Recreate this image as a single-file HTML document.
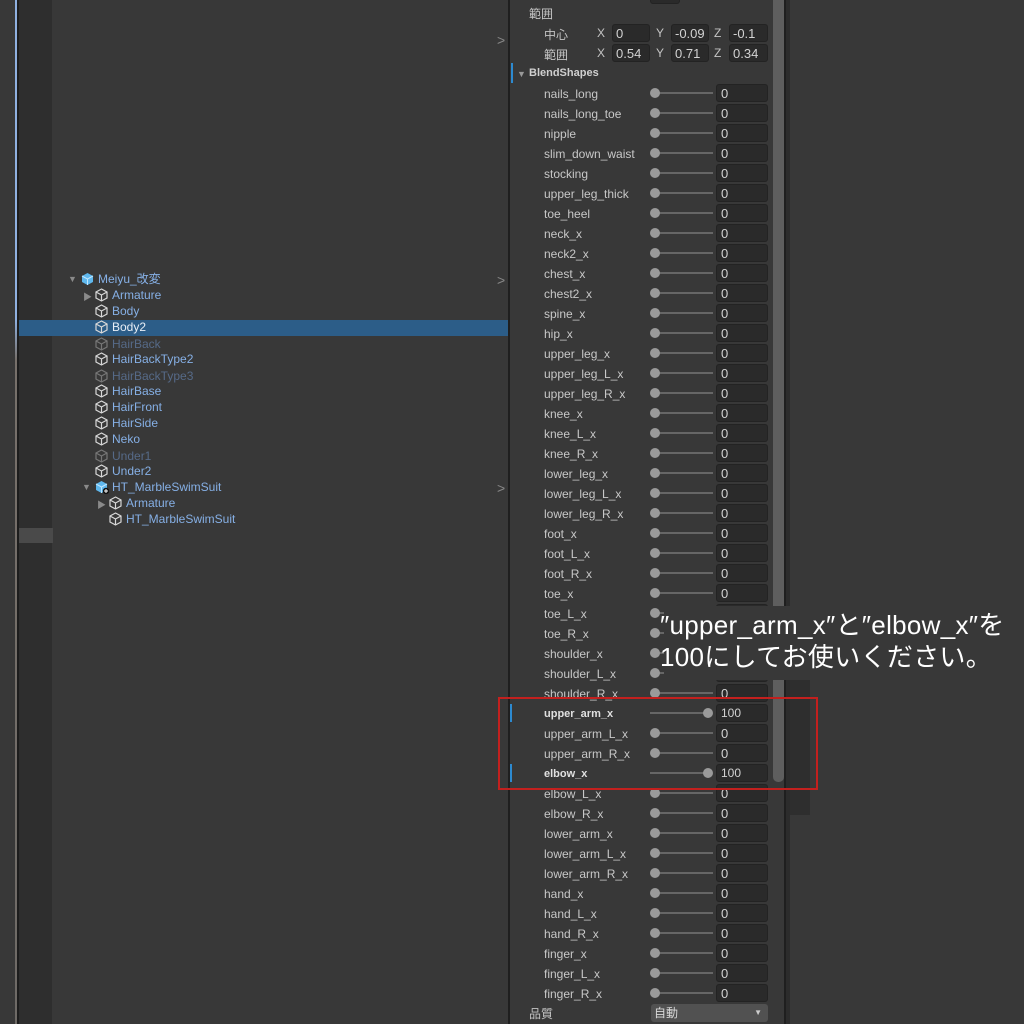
<!DOCTYPE html>
<html><head><meta charset="utf-8"><style>
*{margin:0;padding:0;box-sizing:border-box}
body{width:1024px;height:1024px;background:#383838;position:relative;overflow:hidden;font-family:"Liberation Sans","Noto Sans CJK JP",sans-serif;font-size:12px;color:#c4c4c4}
.a{position:absolute}
.h{position:absolute;height:16px;line-height:16px;color:#86b0e6;white-space:nowrap}
.h svg{position:absolute;left:-17px;top:1px}
.dis{color:#566a88}
.r{position:absolute;left:510px;width:262px;height:20px}
.r .l{position:absolute;left:34px;top:4px;line-height:14px;color:#c8c8c8}
.r .t{position:absolute;left:145px;top:9px;width:58px;height:2px;background:#666}
.r .d{position:absolute;left:140px;top:5px;width:10px;height:10px;border-radius:50%;background:#9a9a9a}
.r .f{position:absolute;left:206px;top:1px;width:52px;height:18px;background:#2a2a2a;border:1px solid #232323;border-radius:3px;line-height:17px;padding-left:4px;color:#d2d2d2;font-size:13px}
.b .l{color:#e0e0e0;font-weight:bold;font-size:11px}
.b .t{left:140px}
.b .d{left:193px}
.b .f{font-size:12px}
.b:before{content:"";position:absolute;left:0;top:1px;width:2px;height:18px;background:#2d8ad0}
.in{position:absolute;height:18px;background:#2a2a2a;border:1px solid #232323;border-radius:3px;line-height:17px;padding-left:3px;color:#d2d2d2;font-size:13px}
</style></head><body>
<div class="a" style="left:15px;top:0;width:2px;height:1024px;background:linear-gradient(#8fb0e0 0,#8fb0e0 320px,#77706a 360px,#6e6a66 1024px)"></div>
<div class="a" style="left:17px;top:0;width:2px;height:1024px;background:#1d1d1d"></div>
<div class="a" style="left:19px;top:0;width:33px;height:1024px;background:#2e2e2e"></div>
<div class="a" style="left:19px;top:528px;width:34px;height:15px;background:#4a4a4a"></div>
<div class="a" style="left:508px;top:0;width:2px;height:1024px;background:#1f1f1f"></div>
<div class="a" style="left:497px;top:32px;color:#888;font-size:14px">&gt;</div>
<div class="a" style="left:497px;top:272px;color:#888;font-size:14px">&gt;</div>
<div class="a" style="left:497px;top:480px;color:#888;font-size:14px">&gt;</div>
<div class="a" style="left:19px;top:320px;width:489px;height:16px;background:#2c5d88"></div>

<svg width="0" height="0" style="position:absolute"><defs>
<g id="cb" fill="none" stroke="#d8d8d8" stroke-width="1.2"><path d="M6.5 1 L12 4 L12 10 L6.5 13 L1 10 L1 4 Z M1 4 L6.5 7 L12 4 M6.5 7 L6.5 13"/></g>
<g id="cbd" fill="none" stroke="#777" stroke-width="1.2"><path d="M6.5 1 L12 4 L12 10 L6.5 13 L1 10 L1 4 Z M1 4 L6.5 7 L12 4 M6.5 7 L6.5 13"/></g>
<g id="pf"><path d="M6.5 1 L12 4 L12 10 L6.5 13 L1 10 L1 4 Z" fill="#5fb8ee"/><path d="M1 4 L6.5 7 L12 4 M6.5 7 L6.5 13" stroke="#bfe6ff" fill="none"/></g>
</defs></svg>

<div class="a" style="left:68px;top:274px;color:#8a8a8a;font-size:9px">▼</div>
<div class="h" style="left:98px;top:271px"><svg width="14" height="14"><use href="#pf"/></svg>Meiyu_改変</div>
<div class="a" style="left:83px;top:290px;color:#8a8a8a;font-size:9px">▶</div>
<div class="h" style="left:112px;top:287px"><svg width="14" height="14"><use href="#cb"/></svg>Armature</div>
<div class="h" style="left:112px;top:303px"><svg width="14" height="14"><use href="#cb"/></svg>Body</div>
<div class="h" style="left:112px;top:319px;color:#e8eef6"><svg width="14" height="14"><use href="#cb"/></svg>Body2</div>
<div class="h dis" style="left:112px;top:336px"><svg width="14" height="14"><use href="#cbd"/></svg>HairBack</div>
<div class="h" style="left:112px;top:351px"><svg width="14" height="14"><use href="#cb"/></svg>HairBackType2</div>
<div class="h dis" style="left:112px;top:368px"><svg width="14" height="14"><use href="#cbd"/></svg>HairBackType3</div>
<div class="h" style="left:112px;top:383px"><svg width="14" height="14"><use href="#cb"/></svg>HairBase</div>
<div class="h" style="left:112px;top:399px"><svg width="14" height="14"><use href="#cb"/></svg>HairFront</div>
<div class="h" style="left:112px;top:415px"><svg width="14" height="14"><use href="#cb"/></svg>HairSide</div>
<div class="h" style="left:112px;top:431px"><svg width="14" height="14"><use href="#cb"/></svg>Neko</div>
<div class="h dis" style="left:112px;top:448px"><svg width="14" height="14"><use href="#cbd"/></svg>Under1</div>
<div class="h" style="left:112px;top:463px"><svg width="14" height="14"><use href="#cb"/></svg>Under2</div>
<div class="a" style="left:82px;top:482px;color:#8a8a8a;font-size:9px">▼</div>
<div class="h" style="left:112px;top:479px"><svg width="14" height="14"><use href="#pf"/><circle cx="11" cy="11" r="3.2" fill="#111"/><path d="M11 9v4M9 11h4" stroke="#fff"/></svg>HT_MarbleSwimSuit</div>
<div class="a" style="left:97px;top:498px;color:#8a8a8a;font-size:9px">▶</div>
<div class="h" style="left:126px;top:495px"><svg width="14" height="14"><use href="#cb"/></svg>Armature</div>
<div class="h" style="left:126px;top:511px"><svg width="14" height="14"><use href="#cb"/></svg>HT_MarbleSwimSuit</div>

<!-- inspector -->
<div class="a" style="left:773px;top:0;width:11px;height:782px;background:#5e5e5e;border-radius:0 0 5px 5px"></div>
<div class="a" style="left:784px;top:0;width:2px;height:1024px;background:#1f1f1f"></div>
<div class="a" style="left:786px;top:0;width:4px;height:1024px;background:#2c2c2c"></div>
<div class="a" style="left:790px;top:680px;width:20px;height:135px;background:#2e2e2e"></div>
<div class="in" style="left:650px;top:-14px;width:30px"></div>
<div class="a" style="left:529px;top:5px">範囲</div>
<div class="a" style="left:544px;top:26px">中心</div>
<div class="a" style="left:544px;top:46px">範囲</div>
<div class="a" style="left:597px;top:26px">X</div><div class="in" style="left:612px;top:24px;width:38px">0</div>
<div class="a" style="left:656px;top:26px">Y</div><div class="in" style="left:671px;top:24px;width:38px">-0.09</div>
<div class="a" style="left:714px;top:26px">Z</div><div class="in" style="left:729px;top:24px;width:39px">-0.1</div>
<div class="a" style="left:597px;top:46px">X</div><div class="in" style="left:612px;top:44px;width:38px">0.54</div>
<div class="a" style="left:656px;top:46px">Y</div><div class="in" style="left:671px;top:44px;width:38px">0.71</div>
<div class="a" style="left:714px;top:46px">Z</div><div class="in" style="left:729px;top:44px;width:39px">0.34</div>
<div class="a" style="left:511px;top:63px;width:2px;height:20px;background:#2d8ad0"></div>
<div class="a" style="left:517px;top:69px;color:#999;font-size:9px">▼</div>
<div class="a" style="left:529px;top:67px;font-weight:bold;font-size:11px;color:#d0d0d0">BlendShapes</div>

<div class="r" style="top:83px"><span class="l">nails_long</span><i class="t"></i><i class="d"></i><span class="f">0</span></div>
<div class="r" style="top:103px"><span class="l">nails_long_toe</span><i class="t"></i><i class="d"></i><span class="f">0</span></div>
<div class="r" style="top:123px"><span class="l">nipple</span><i class="t"></i><i class="d"></i><span class="f">0</span></div>
<div class="r" style="top:143px"><span class="l">slim_down_waist</span><i class="t"></i><i class="d"></i><span class="f">0</span></div>
<div class="r" style="top:163px"><span class="l">stocking</span><i class="t"></i><i class="d"></i><span class="f">0</span></div>
<div class="r" style="top:183px"><span class="l">upper_leg_thick</span><i class="t"></i><i class="d"></i><span class="f">0</span></div>
<div class="r" style="top:203px"><span class="l">toe_heel</span><i class="t"></i><i class="d"></i><span class="f">0</span></div>
<div class="r" style="top:223px"><span class="l">neck_x</span><i class="t"></i><i class="d"></i><span class="f">0</span></div>
<div class="r" style="top:243px"><span class="l">neck2_x</span><i class="t"></i><i class="d"></i><span class="f">0</span></div>
<div class="r" style="top:263px"><span class="l">chest_x</span><i class="t"></i><i class="d"></i><span class="f">0</span></div>
<div class="r" style="top:283px"><span class="l">chest2_x</span><i class="t"></i><i class="d"></i><span class="f">0</span></div>
<div class="r" style="top:303px"><span class="l">spine_x</span><i class="t"></i><i class="d"></i><span class="f">0</span></div>
<div class="r" style="top:323px"><span class="l">hip_x</span><i class="t"></i><i class="d"></i><span class="f">0</span></div>
<div class="r" style="top:343px"><span class="l">upper_leg_x</span><i class="t"></i><i class="d"></i><span class="f">0</span></div>
<div class="r" style="top:363px"><span class="l">upper_leg_L_x</span><i class="t"></i><i class="d"></i><span class="f">0</span></div>
<div class="r" style="top:383px"><span class="l">upper_leg_R_x</span><i class="t"></i><i class="d"></i><span class="f">0</span></div>
<div class="r" style="top:403px"><span class="l">knee_x</span><i class="t"></i><i class="d"></i><span class="f">0</span></div>
<div class="r" style="top:423px"><span class="l">knee_L_x</span><i class="t"></i><i class="d"></i><span class="f">0</span></div>
<div class="r" style="top:443px"><span class="l">knee_R_x</span><i class="t"></i><i class="d"></i><span class="f">0</span></div>
<div class="r" style="top:463px"><span class="l">lower_leg_x</span><i class="t"></i><i class="d"></i><span class="f">0</span></div>
<div class="r" style="top:483px"><span class="l">lower_leg_L_x</span><i class="t"></i><i class="d"></i><span class="f">0</span></div>
<div class="r" style="top:503px"><span class="l">lower_leg_R_x</span><i class="t"></i><i class="d"></i><span class="f">0</span></div>
<div class="r" style="top:523px"><span class="l">foot_x</span><i class="t"></i><i class="d"></i><span class="f">0</span></div>
<div class="r" style="top:543px"><span class="l">foot_L_x</span><i class="t"></i><i class="d"></i><span class="f">0</span></div>
<div class="r" style="top:563px"><span class="l">foot_R_x</span><i class="t"></i><i class="d"></i><span class="f">0</span></div>
<div class="r" style="top:583px"><span class="l">toe_x</span><i class="t"></i><i class="d"></i><span class="f">0</span></div>
<div class="r" style="top:603px"><span class="l">toe_L_x</span><i class="t"></i><i class="d"></i><span class="f">0</span></div>
<div class="r" style="top:623px"><span class="l">toe_R_x</span><i class="t"></i><i class="d"></i><span class="f">0</span></div>
<div class="r" style="top:643px"><span class="l">shoulder_x</span><i class="t"></i><i class="d"></i><span class="f">0</span></div>
<div class="r" style="top:663px"><span class="l">shoulder_L_x</span><i class="t"></i><i class="d"></i><span class="f">0</span></div>
<div class="r" style="top:683px"><span class="l">shoulder_R_x</span><i class="t"></i><i class="d"></i><span class="f">0</span></div>
<div class="r b" style="top:703px"><span class="l">upper_arm_x</span><i class="t"></i><i class="d"></i><span class="f">100</span></div>
<div class="r" style="top:723px"><span class="l">upper_arm_L_x</span><i class="t"></i><i class="d"></i><span class="f">0</span></div>
<div class="r" style="top:743px"><span class="l">upper_arm_R_x</span><i class="t"></i><i class="d"></i><span class="f">0</span></div>
<div class="r b" style="top:763px"><span class="l">elbow_x</span><i class="t"></i><i class="d"></i><span class="f">100</span></div>
<div class="r" style="top:783px"><span class="l">elbow_L_x</span><i class="t"></i><i class="d"></i><span class="f">0</span></div>
<div class="r" style="top:803px"><span class="l">elbow_R_x</span><i class="t"></i><i class="d"></i><span class="f">0</span></div>
<div class="r" style="top:823px"><span class="l">lower_arm_x</span><i class="t"></i><i class="d"></i><span class="f">0</span></div>
<div class="r" style="top:843px"><span class="l">lower_arm_L_x</span><i class="t"></i><i class="d"></i><span class="f">0</span></div>
<div class="r" style="top:863px"><span class="l">lower_arm_R_x</span><i class="t"></i><i class="d"></i><span class="f">0</span></div>
<div class="r" style="top:883px"><span class="l">hand_x</span><i class="t"></i><i class="d"></i><span class="f">0</span></div>
<div class="r" style="top:903px"><span class="l">hand_L_x</span><i class="t"></i><i class="d"></i><span class="f">0</span></div>
<div class="r" style="top:923px"><span class="l">hand_R_x</span><i class="t"></i><i class="d"></i><span class="f">0</span></div>
<div class="r" style="top:943px"><span class="l">finger_x</span><i class="t"></i><i class="d"></i><span class="f">0</span></div>
<div class="r" style="top:963px"><span class="l">finger_L_x</span><i class="t"></i><i class="d"></i><span class="f">0</span></div>
<div class="r" style="top:983px"><span class="l">finger_R_x</span><i class="t"></i><i class="d"></i><span class="f">0</span></div>
<div class="a" style="left:529px;top:1005px">品質</div>
<div class="a" style="left:651px;top:1004px;width:117px;height:18px;background:#515151;border-radius:3px;line-height:18px;padding-left:3px;color:#d8d8d8">自動<span style="position:absolute;right:6px;font-size:8px;color:#ccc">▼</span></div>

<!-- overlay caption -->
<div class="a" style="left:664px;top:606px;width:360px;height:74px;background:#383838"></div>
<div class="a" style="left:660px;top:609px;color:#fff;font-size:26px;line-height:32px;letter-spacing:0.3px;white-space:nowrap;font-family:'Liberation Sans','Noto Sans CJK JP',sans-serif">″upper_arm_x″と″elbow_x″を<br>100にしてお使いください。</div>

<div class="a" style="left:498px;top:697px;width:320px;height:93px;border:2px solid #c3201e"></div>
</body></html>
